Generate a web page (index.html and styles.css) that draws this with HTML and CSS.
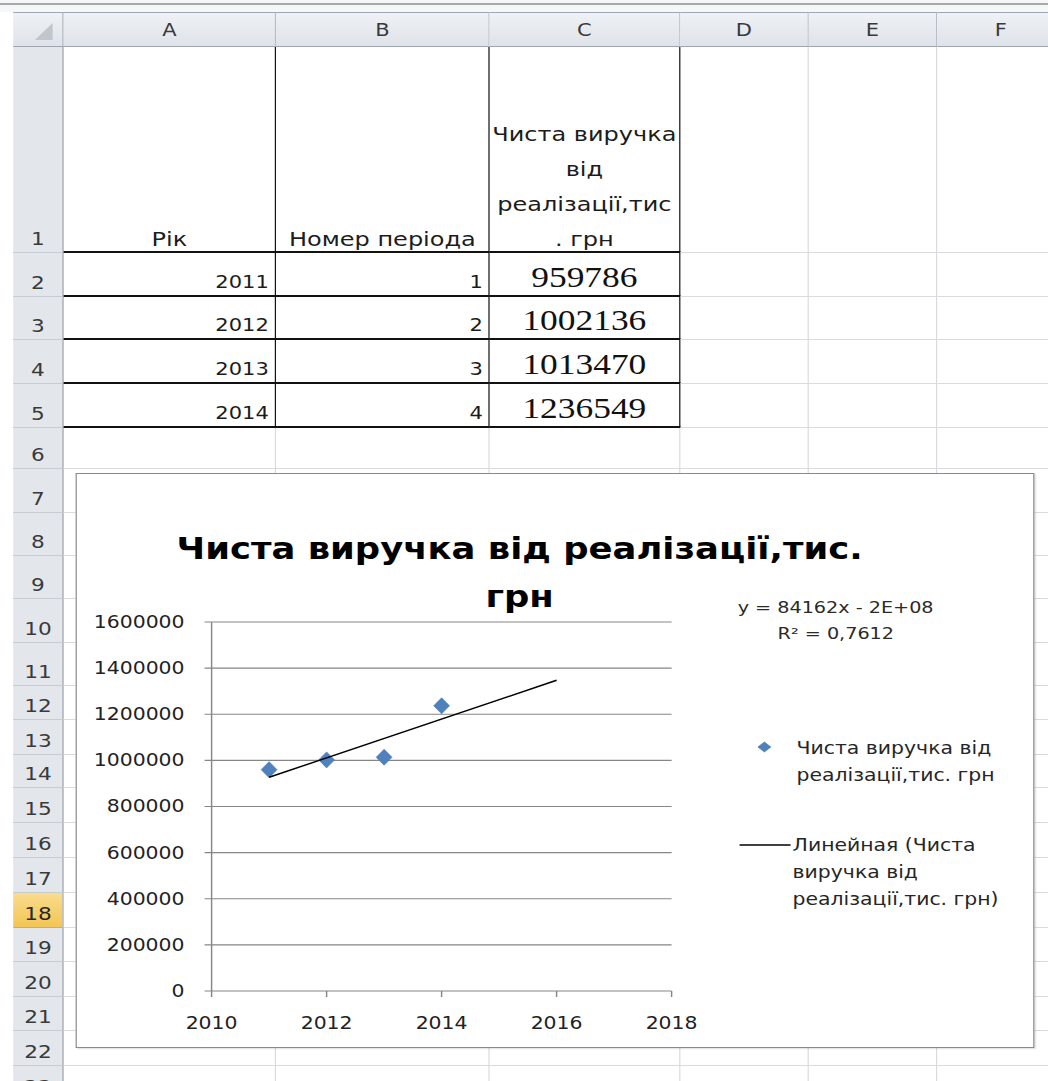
FILE: index.html
```html
<!DOCTYPE html>
<html lang="uk">
<head>
<meta charset="utf-8">
<title>Чиста виручка від реалізації</title>
<link rel="stylesheet" href="styles.css">
</head>
<body>
<div class="topbar"><div class="rule"></div></div>
<div class="sheet">
  <div class="grid">
    <!-- column headers -->
    <div class="corner"><svg class="corner-mark" width="15" height="17" viewBox="0 0 15 17"><polygon points="15,0 15,17 0,17"/></svg></div>
    <div class="ch">A</div><div class="ch">B</div><div class="ch">C</div><div class="ch">D</div><div class="ch">E</div><div class="ch">F</div>

    <!-- row 1: table heading -->
    <div class="rh">1</div>
    <div class="c t txt">Рік</div>
    <div class="c t txt">Номер періода</div>
    <div class="c t wrapcell"><div class="wrap">Чиста виручка<br>від<br>реалізації,тис<br>. грн</div></div>
    <div class="c"></div><div class="c"></div><div class="c"></div>

    <!-- rows 2-5: data -->
    <div class="rh">2</div>
    <div class="c t num">2011</div><div class="c t num">1</div><div class="c t val">959786</div>
    <div class="c"></div><div class="c"></div><div class="c"></div>

    <div class="rh">3</div>
    <div class="c t num">2012</div><div class="c t num">2</div><div class="c t val">1002136</div>
    <div class="c"></div><div class="c"></div><div class="c"></div>

    <div class="rh">4</div>
    <div class="c t num">2013</div><div class="c t num">3</div><div class="c t val">1013470</div>
    <div class="c"></div><div class="c"></div><div class="c"></div>

    <div class="rh">5</div>
    <div class="c t num">2014</div><div class="c t num">4</div><div class="c t val">1236549</div>
    <div class="c"></div><div class="c"></div><div class="c"></div>

    <!-- empty rows -->
    <div class="rh">6</div><div class="c"></div><div class="c"></div><div class="c"></div><div class="c"></div><div class="c"></div><div class="c"></div>
    <div class="rh">7</div><div class="c"></div><div class="c"></div><div class="c"></div><div class="c"></div><div class="c"></div><div class="c"></div>
    <div class="rh">8</div><div class="c"></div><div class="c"></div><div class="c"></div><div class="c"></div><div class="c"></div><div class="c"></div>
    <div class="rh">9</div><div class="c"></div><div class="c"></div><div class="c"></div><div class="c"></div><div class="c"></div><div class="c"></div>
    <div class="rh">10</div><div class="c"></div><div class="c"></div><div class="c"></div><div class="c"></div><div class="c"></div><div class="c"></div>
    <div class="rh">11</div><div class="c"></div><div class="c"></div><div class="c"></div><div class="c"></div><div class="c"></div><div class="c"></div>
    <div class="rh">12</div><div class="c"></div><div class="c"></div><div class="c"></div><div class="c"></div><div class="c"></div><div class="c"></div>
    <div class="rh">13</div><div class="c"></div><div class="c"></div><div class="c"></div><div class="c"></div><div class="c"></div><div class="c"></div>
    <div class="rh">14</div><div class="c"></div><div class="c"></div><div class="c"></div><div class="c"></div><div class="c"></div><div class="c"></div>
    <div class="rh">15</div><div class="c"></div><div class="c"></div><div class="c"></div><div class="c"></div><div class="c"></div><div class="c"></div>
    <div class="rh">16</div><div class="c"></div><div class="c"></div><div class="c"></div><div class="c"></div><div class="c"></div><div class="c"></div>
    <div class="rh">17</div><div class="c"></div><div class="c"></div><div class="c"></div><div class="c"></div><div class="c"></div><div class="c"></div>
    <div class="rh sel">18</div><div class="c"></div><div class="c"></div><div class="c"></div><div class="c"></div><div class="c"></div><div class="c"></div>
    <div class="rh">19</div><div class="c"></div><div class="c"></div><div class="c"></div><div class="c"></div><div class="c"></div><div class="c"></div>
    <div class="rh">20</div><div class="c"></div><div class="c"></div><div class="c"></div><div class="c"></div><div class="c"></div><div class="c"></div>
    <div class="rh">21</div><div class="c"></div><div class="c"></div><div class="c"></div><div class="c"></div><div class="c"></div><div class="c"></div>
    <div class="rh">22</div><div class="c"></div><div class="c"></div><div class="c"></div><div class="c"></div><div class="c"></div><div class="c"></div>
    <div class="rh">23</div><div class="c"></div><div class="c"></div><div class="c"></div><div class="c"></div><div class="c"></div><div class="c"></div>
  </div>

  <!-- embedded scatter chart floating over the cells -->
  <div class="chart">
    <svg class="plot" width="797" height="573" viewBox="0 0 797 573">
      <g class="title">
        <text x="369" y="85">Чиста виручка від реалізації,тис.</text>
        <text x="369" y="133">грн</text>
      </g>

      <g class="gridlines">
        <line x1="112.33" y1="470.9" x2="495.67" y2="470.9"/>
        <line x1="112.33" y1="424.75" x2="495.67" y2="424.75"/>
        <line x1="112.33" y1="378.6" x2="495.67" y2="378.6"/>
        <line x1="112.33" y1="332.5" x2="495.67" y2="332.5"/>
        <line x1="112.33" y1="286.4" x2="495.67" y2="286.4"/>
        <line x1="112.33" y1="240.25" x2="495.67" y2="240.25"/>
        <line x1="112.33" y1="194.1" x2="495.67" y2="194.1"/>
        <line x1="112.33" y1="148" x2="495.67" y2="148"/>
      </g>

      <g class="axis">
        <line x1="112.33" y1="148" x2="112.33" y2="517"/>
        <line x1="112.33" y1="517" x2="495.67" y2="517"/>
        <line x1="106.5" y1="517" x2="112.33" y2="517"/>
        <line x1="106.5" y1="470.9" x2="112.33" y2="470.9"/>
        <line x1="106.5" y1="424.75" x2="112.33" y2="424.75"/>
        <line x1="106.5" y1="378.6" x2="112.33" y2="378.6"/>
        <line x1="106.5" y1="332.5" x2="112.33" y2="332.5"/>
        <line x1="106.5" y1="286.4" x2="112.33" y2="286.4"/>
        <line x1="106.5" y1="240.25" x2="112.33" y2="240.25"/>
        <line x1="106.5" y1="194.1" x2="112.33" y2="194.1"/>
        <line x1="106.5" y1="148" x2="112.33" y2="148"/>
        <line x1="112.33" y1="517" x2="112.33" y2="523"/>
        <line x1="208.17" y1="517" x2="208.17" y2="523"/>
        <line x1="304" y1="517" x2="304" y2="523"/>
        <line x1="399.83" y1="517" x2="399.83" y2="523"/>
        <line x1="495.67" y1="517" x2="495.67" y2="523"/>
      </g>

      <g class="ylabels">
        <text x="89.8" y="523">0</text>
        <text x="89.8" y="476.9">200000</text>
        <text x="89.8" y="430.75">400000</text>
        <text x="89.8" y="384.6">600000</text>
        <text x="89.8" y="338.5">800000</text>
        <text x="89.8" y="292.4">1000000</text>
        <text x="89.8" y="246.25">1200000</text>
        <text x="89.8" y="200.1">1400000</text>
        <text x="89.8" y="154">1600000</text>
      </g>

      <g class="xlabels">
        <text x="112.33" y="555">2010</text>
        <text x="208.17" y="555">2012</text>
        <text x="304" y="555">2014</text>
        <text x="399.83" y="555">2016</text>
        <text x="495.67" y="555">2018</text>
      </g>

      <g class="markers">
        <path d="M160.25 287.65 L166.85 295.65 L160.25 303.65 L153.65 295.65 Z"/>
        <path d="M208.17 277.88 L214.77 285.88 L208.17 293.88 L201.57 285.88 Z"/>
        <path d="M256.08 275.27 L262.68 283.27 L256.08 291.27 L249.48 283.27 Z"/>
        <path d="M304 223.83 L310.6 231.83 L304 239.83 L297.4 231.83 Z"/>
      </g>

      <line class="trend" x1="160.25" y1="303.27" x2="399.83" y2="206.23"/>

      <g class="equation">
        <text x="550.7" y="139">y = 84162x - 2E+08</text>
        <text x="584" y="165">R² = 0,7612</text>
      </g>

      <g class="legend">
        <path class="legend-marker" d="M573 268 L578.4 273 L573 278 L567.6 273 Z"/>
        <text x="599.8" y="280">Чиста виручка від</text>
        <text x="599.8" y="307">реалізації,тис. грн</text>
        <line class="trend" x1="552.3" y1="371" x2="594.8" y2="371"/>
        <text x="596.5" y="377">Линейная (Чиста</text>
        <text x="596.5" y="404">виручка від</text>
        <text x="596.5" y="431">реалізації,тис. грн)</text>
      </g>
    </svg>
  </div>
</div>
</body>
</html>
```

FILE: styles.css
```css
* {
  box-sizing: border-box;
}

html,
body {
  margin: 0;
  padding: 0;
}

body {
  width: 1048px;
  height: 1081px;
  overflow: hidden;
  background: #ffffff;
  font-family: "DejaVu Sans", "Noto Sans", sans-serif;
  color: #1c1c1c;
}

/* strip under the formula bar */
.topbar {
  height: 12px;
  padding-top: 3px;
  background: #f6f7f9;
}

.topbar .rule {
  height: 2px;
  background: #a8a8a8;
}

/* the worksheet is drawn at a wide zoom */
.sheet {
  position: relative;
  width: 880px;
  padding-left: 10.83px;
  transform: scaleX(1.2);
  transform-origin: 0 0;
  background: #ffffff;
}

.grid {
  display: grid;
  grid-template-columns: 42.5px 176.67px 178.33px 158.33px 107.5px 106.67px 107.5px;
  grid-template-rows:
    35px 206px 44px 43px 44px 44px 41px 44px 43px 43px 44px 43px
    34px 35px 33px 35px 35px 35px 35px 34px 35px 34px 35px 35px;
}

/* headers */
.corner,
.ch {
  background: linear-gradient(#eef1f5, #dfe3e9);
  border-top: 1px solid #9ea6b0;
  border-bottom: 1px solid #9ea6b0;
  border-right: 1px solid #b7bec7;
}

.corner {
  display: flex;
  justify-content: flex-end;
  align-items: flex-end;
  padding: 0 8px 6px 0;
  border-right-color: #9ea6b0;
}

.corner-mark polygon {
  fill: #c1c6cd;
}

.ch {
  display: flex;
  align-items: center;
  justify-content: center;
  font-size: 17.5px;
  color: #3a3a3a;
}

.rh {
  display: flex;
  align-items: flex-end;
  justify-content: center;
  padding-bottom: 3.5px;
  font-size: 18px;
  line-height: 20px;
  color: #3a3a3a;
  background: #e3e7ec;
  border-right: 1px solid #9ea6b0;
  border-bottom: 1px solid #c6ccd4;
}

.rh.sel {
  background: linear-gradient(#f9dc8e, #f3c554);
  border-bottom-color: #e0aa44;
  color: #262626;
}

/* cells */
.c {
  border-right: 1px solid #d9dbde;
  border-bottom: 1px solid #d9dbde;
}

.c.t {
  border-right: 1.6px solid #111111;
  border-bottom: 2px solid #111111;
}

.txt {
  display: flex;
  justify-content: center;
  align-items: flex-end;
  font-size: 20px;
  line-height: 24px;
  white-space: nowrap;
}

.wrapcell {
  display: flex;
  flex-direction: column;
  justify-content: flex-end;
  align-items: center;
}

.wrap {
  font-size: 20px;
  line-height: 35px;
  text-align: center;
  white-space: nowrap;
  margin-bottom: -5.5px;
}

.num {
  display: flex;
  justify-content: flex-end;
  align-items: flex-end;
  font-size: 17.5px;
  line-height: 22px;
  padding: 0 5px 2px 0;
}

.val {
  display: flex;
  justify-content: center;
  align-items: flex-end;
  font-family: "Liberation Serif", "DejaVu Serif", serif;
  font-size: 29.5px;
  line-height: 36px;
  color: #111111;
}

/* chart object */
.chart {
  position: absolute;
  left: 63.33px;
  top: 461px;
  width: 799.17px;
  height: 575px;
  background: #ffffff;
  border: 1px solid #8a8a8a;
  box-shadow: 1px 1px 1px rgba(0, 0, 0, 0.12);
}

.plot {
  display: block;
}

.plot text {
  font-family: "DejaVu Sans", sans-serif;
}

.title text {
  font-size: 29.5px;
  font-weight: bold;
  fill: #000000;
  text-anchor: middle;
}

.gridlines line,
.axis line {
  stroke: #868686;
  stroke-width: 1.2;
}

.ylabels text,
.xlabels text {
  font-size: 17px;
  fill: #222222;
}

.ylabels text {
  text-anchor: end;
}

.xlabels text {
  text-anchor: middle;
}

.markers path,
.legend-marker {
  fill: #4f81bd;
  stroke: #4a7ab4;
  stroke-width: 0.6;
}

.trend {
  stroke: #000000;
  stroke-width: 1.4;
}

.equation text {
  font-size: 16px;
  fill: #2a2a2a;
}

.legend text {
  font-size: 17px;
  fill: #262626;
}
```
